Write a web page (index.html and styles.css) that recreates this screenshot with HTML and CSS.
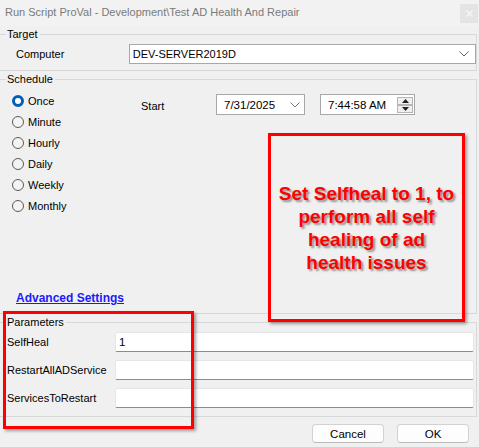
FILE: index.html
```html
<!DOCTYPE html>
<html>
<head>
<meta charset="utf-8">
<link rel="stylesheet" href="styles.css">
</head>
<body>
<div class="window">
  <div class="titlebar">
    <span class="title">Run Script ProVal - Development\Test AD Health And Repair</span>
    <span class="close"><svg width="7" height="7" viewBox="0 0 7 7"><path d="M0.5 0.5L6.5 6.5M6.5 0.5L0.5 6.5" stroke="#f7f7f7" stroke-width="1.2"/></svg></span>
  </div>

  <fieldset class="group target">
    <legend>Target</legend>
    <div class="computer-row">
      <span class="computer-label">Computer</span>
      <div class="combo">
        <span>DEV-SERVER2019D</span>
        <svg class="chev" width="10" height="6" viewBox="0 0 10 6"><path d="M0.5 0.5L5 5L9.5 0.5" fill="none" stroke="#666" stroke-width="1"/></svg>
      </div>
    </div>
  </fieldset>

  <fieldset class="group schedule">
    <legend>Schedule</legend>
    <div class="sched-body">
      <div class="radios">
        <div class="radio-row"><span class="radio checked"></span><span>Once</span></div>
        <div class="radio-row"><span class="radio"></span><span>Minute</span></div>
        <div class="radio-row"><span class="radio"></span><span>Hourly</span></div>
        <div class="radio-row"><span class="radio"></span><span>Daily</span></div>
        <div class="radio-row"><span class="radio"></span><span>Weekly</span></div>
        <div class="radio-row"><span class="radio"></span><span>Monthly</span></div>
      </div>
      <div class="start-row">
        <span class="start-label">Start</span>
        <div class="date">
          <span>7/31/2025</span>
          <svg class="chev" width="10" height="6" viewBox="0 0 10 6"><path d="M0.5 0.5L5 5L9.5 0.5" fill="none" stroke="#777" stroke-width="1"/></svg>
        </div>
        <div class="time">
          <span>7:44:58 AM</span>
          <div class="spin">
            <span class="spin-btn"><svg width="7" height="4" viewBox="0 0 7 4"><path d="M0 4L3.5 0L7 4Z" fill="#222"/></svg></span>
            <span class="spin-btn"><svg width="7" height="4" viewBox="0 0 7 4"><path d="M0 0L3.5 4L7 0Z" fill="#222"/></svg></span>
          </div>
        </div>
      </div>
    </div>
    <a class="adv" href="#">Advanced Settings</a>
  </fieldset>

  <fieldset class="group params">
    <legend>Parameters</legend>
    <div class="param-row"><span class="param-label">SelfHeal</span><div class="textbox">1</div></div>
    <div class="param-row"><span class="param-label">RestartAllADService</span><div class="textbox"></div></div>
    <div class="param-row"><span class="param-label">ServicesToRestart</span><div class="textbox"></div></div>
  </fieldset>

  <div class="footer">
    <button class="btn">Cancel</button>
    <button class="btn">OK</button>
  </div>

  <div class="note"><p>Set Selfheal to 1, to<br>perform all self<br>healing of ad<br>health issues</p></div>
  <div class="param-highlight"></div>
</div>
</body>
</html>
```

FILE: styles.css
```css
* { box-sizing: border-box; }
html, body { margin: 0; padding: 0; }
body {
  width: 479px;
  height: 447px;
  overflow: hidden;
  background: #f0f0f0;
  font-family: "Liberation Sans", Arial, sans-serif;
  font-size: 11px;
  color: #000;
}
.window {
  position: relative;
  width: 479px;
  height: 447px;
  background: #f0f0f0;
}
.titlebar {
  height: 26px;
  display: flex;
  align-items: center;
  justify-content: space-between;
  padding: 0 1px 3px 5px;
  background: #f2f2f2;
}
.title {
  color: #7a7a7a;
  font-size: 11px;
}
.close {
  width: 18px;
  height: 19px;
  background: #e4e4e4;
  display: flex;
  align-items: center;
  justify-content: center;
  margin-top: 4px;
}
.group {
  margin: 0 2px 0 -1px;
  padding: 0;
  border: 1px solid #d8d8d8;
  min-width: 0;
}
.group legend {
  margin-left: 6px;
  padding: 0 2px 0 1px;
  height: 16px;
  line-height: 16px;
  font-size: 11px;
}
.target { padding: 2px 0 6px 0; }
.computer-row {
  display: flex;
  align-items: center;
  padding-left: 16px;
}
.computer-label { width: 113px; }
.combo {
  width: 348px;
  height: 20px;
  background: #fff;
  border: 1px solid #a8a8a8;
  display: flex;
  align-items: center;
  justify-content: space-between;
  padding: 0 6px 0 3px;
}
.schedule { padding: 3px 0 7px 0; }
.sched-body {
  display: flex;
  height: 126px;
}
.radios {
  width: 141px;
  padding-left: 12px;
  display: flex;
  flex-direction: column;
}
.radio-row {
  height: 21px;
  display: flex;
  align-items: center;
  gap: 4px;
  font-size: 11px;
}
.radio {
  width: 12px;
  height: 12px;
  border-radius: 50%;
  border: 1px solid #5a5a5a;
  background: #f4f4f4;
  flex: none;
}
.radio.checked {
  border: 3.5px solid #005fb8;
  background: #fff;
}
.start-row {
  display: flex;
  align-items: flex-start;
  margin-top: 4px;
  height: 21px;
}
.start-label {
  width: 75px;
  padding-top: 6px;
  font-size: 11px;
}
.date, .time {
  height: 21px;
  background: #fff;
  border: 1px solid #a8a8a8;
  display: flex;
  align-items: center;
  justify-content: space-between;
  padding-left: 7px;
  font-size: 11.5px;
}
.date { width: 89px; padding-right: 4px; }
.time { width: 95px; margin-left: 15px; padding-right: 1px; }
.spin {
  display: flex;
  flex-direction: column;
  gap: 0;
}
.spin-btn {
  width: 16px;
  height: 8px;
  border: 1px solid #b5b5b5;
  background: #f0f0f0;
  display: flex;
  align-items: center;
  justify-content: center;
}
.adv {
  display: block;
  margin: 74px 0 0 16px;
  height: 16px;
  line-height: 16px;
  font-size: 12px;
  font-weight: bold;
  color: #1a1aff;
  text-decoration: underline;
  width: max-content;
}
.params { padding: 2px 0 8px 0; }
.param-row {
  display: flex;
  align-items: center;
  padding-left: 7px;
  height: 20px;
  margin-bottom: 8px;
}
.param-row:last-child { margin-bottom: 0; }
.param-label { width: 108px; font-size: 11px; }
.textbox {
  width: 359px;
  height: 20px;
  background: #fff;
  border: 1px solid #e6e6e6;
  border-bottom-color: #8c8c8c;
  border-radius: 2px;
  padding-left: 3px;
  line-height: 18px;
  font-size: 11.5px;
}
.footer {
  display: flex;
  justify-content: flex-end;
  gap: 13px;
  padding: 7px 10px 0 0;
}
.btn {
  width: 72px;
  height: 19px;
  padding: 0;
  font-family: "Liberation Sans", Arial, sans-serif;
  font-size: 11.5px;
  color: #000;
  background: #fdfdfd;
  border: 1px solid #d2d2d2;
  border-bottom-color: #bcbcbc;
  border-radius: 4px;
}
.note {
  position: absolute;
  left: 268px;
  top: 133px;
  width: 197px;
  height: 189px;
  border: 3px solid #ff0000;
  box-shadow: 2px 2px 3px rgba(0, 0, 0, 0.35);
  display: flex;
  align-items: center;
  justify-content: center;
}
.note p {
  margin: 0;
  text-align: center;
  color: #ff0000;
  font-weight: bold;
  font-size: 19px;
  line-height: 23px;
  text-shadow: 2px 2px 2px rgba(80, 80, 80, 0.6);
  padding: 0 2px;
}
.param-highlight {
  position: absolute;
  left: 3px;
  top: 311px;
  width: 191px;
  height: 118px;
  border: 3px solid #ff0000;
  box-shadow: 2px 2px 3px rgba(0, 0, 0, 0.35);
}
```
